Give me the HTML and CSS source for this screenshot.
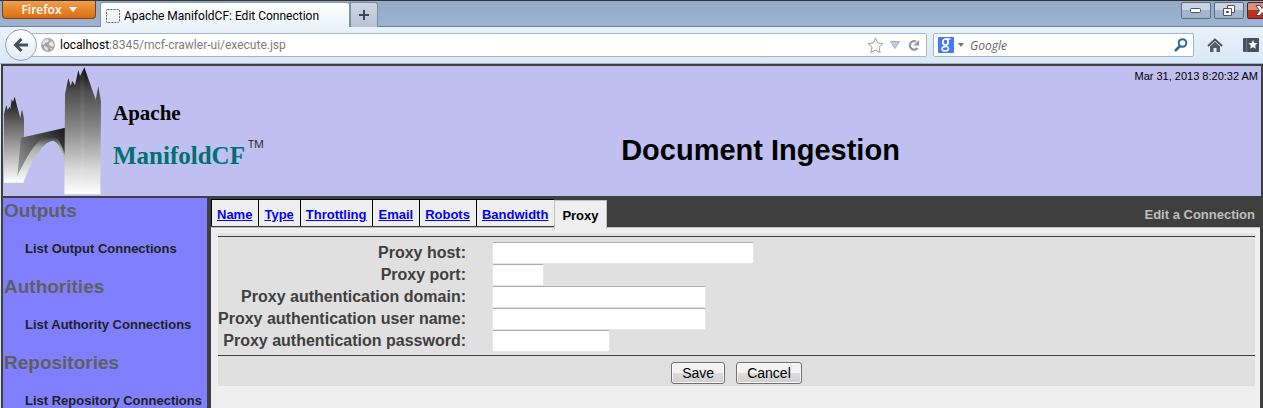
FILE: index.html
```
<!DOCTYPE html>
<html lang="en">
<head>
<meta charset="utf-8">
<title>Apache ManifoldCF: Edit Connection</title>
<link rel="stylesheet" href="styles.css">
</head>
<body>
<div class="titlebar">
  <button class="firefox" type="button">Firefox <svg width="8" height="5" viewBox="0 0 8 5"><path d="M0 0h8L4 5z" fill="#fff"/></svg></button>
  <div class="browser-tab">
    <svg width="14" height="14" viewBox="0 0 14 14"><rect x=".5" y=".5" width="13" height="13" rx="1" fill="none" stroke="#666" stroke-dasharray="2 1"/></svg>
    <span>Apache ManifoldCF: Edit Connection</span>
  </div>
  <button class="new-tab" type="button" aria-label="New tab"><svg width="12" height="12" viewBox="0 0 12 12"><path d="M6 1v10M1 6h10" stroke="#3c4754" stroke-width="2"/></svg></button>
  <div class="window-buttons">
    <button type="button" aria-label="Minimize"><svg width="12" height="5" viewBox="0 0 12 5"><rect x=".5" y=".5" width="10" height="4" rx="1" fill="#fff" stroke="#4c5665"/></svg></button>
    <button type="button" aria-label="Restore"><svg width="13" height="12" viewBox="0 0 13 12"><path d="M4.500.5h7v7h-7z" fill="#fff" stroke="#4c5665"/><path d="M.5 3.500h8v7h-8z" fill="#fff" stroke="#4c5665"/><path d="M3.500 6.500h2v1h-2z" fill="#9ab" stroke="#4c5665"/></svg></button>
    <button class="close" type="button" aria-label="Close"><svg width="14" height="11" viewBox="0 0 14 11"><path d="M1 .5h4l2 3 2-3h4L9.500 5.500l3.500 5H9l-2-3-2 3H1l3.500-5z" fill="#fff" stroke="#5b4450"/></svg></button>
  </div>
</div>
<div class="toolbar">
  <button class="back" type="button" aria-label="Back"><svg width="16" height="16" viewBox="0 0 16 16"><path d="M15 8H3M8.500 2L2.500 8l6 6" fill="none" stroke="#40505f" stroke-width="3"/></svg></button>
  <div class="address">
    <svg width="14" height="14" viewBox="0 0 14 14"><circle cx="7" cy="7" r="7" fill="#a5a5a5"/><path d="M2 3l4-2 2 1-1 2-3 1-1 2-2-1zM8 5l3-2 2 4-1 2-2-1-2-1zM3 8l3 1 1 2-1 2-3-3zM9 10l2 0-1 2z" fill="#e6e6e6"/></svg>
    <span class="url"><b>localhost</b>:8345/mcf-crawler-ui/execute.jsp</span>
    <svg width="17" height="17" viewBox="0 0 17 17"><path d="M8.500 1l2.200 5 5.300.6-4 3.600 1.200 5.500-4.700-2.800-4.700 2.800L5 10.200 1 6.600 6.300 6z" fill="#fbfbfb" stroke="#a0a0a0"/></svg>
    <svg width="10" height="8" viewBox="0 0 10 8"><path d="M.5.5h9L5 7.500z" fill="#c6ccd3" stroke="#a5b0bc"/></svg>
    <svg width="13" height="13" viewBox="0 0 13 13"><path d="M9 2.500A4.300 4.300 0 1 0 10.500 9" fill="none" stroke="#8b96a3" stroke-width="2.200"/><path d="M12 1v5.500H6.500z" fill="#8b96a3"/></svg>
  </div>
  <label class="search">
    <svg width="16" height="16" viewBox="0 0 16 16"><rect width="16" height="16" rx="1" fill="#4478f4"/><ellipse cx="7.500" cy="5" rx="2.700" ry="3" fill="none" stroke="#fff" stroke-width="1.700"/><path d="M8 2h4.500M7 8c0 1 3.500 1.500 3.500 3.700 0 3-6.500 3-6.500.3C4 9.800 6 9.500 8 9.500" fill="none" stroke="#fff" stroke-width="1.500"/></svg>
    <svg width="6" height="4" viewBox="0 0 6 4"><path d="M0 0h6L3 4z" fill="#777"/></svg>
    <input class="search-box" type="text" placeholder="Google" aria-label="Search">
    <svg width="14" height="14" viewBox="0 0 14 14"><circle cx="8.500" cy="5" r="3.800" fill="none" stroke="#2d679f" stroke-width="2"/><path d="M6 8l-5 5" stroke="#2d679f" stroke-width="2.500"/></svg>
  </label>
  <button class="tool" type="button" aria-label="Home"><svg width="16" height="15" viewBox="0 0 16 15"><path d="M1 8l7-6.500L15 8" fill="none" stroke="#46515d" stroke-width="1.800"/><path d="M3 8.500l5-4.700 5 4.700V14H9.500v-4h-3v4H3z" fill="#525d69"/></svg></button>
  <button class="tool bookmarks" type="button" aria-label="Bookmarks"><svg width="16" height="14" viewBox="0 0 16 14"><rect width="16" height="14" rx="1" fill="#46525f"/><path d="M3.500 0v14" stroke="#6d7883"/><path d="M10 2l1.300 3 3.200.3-2.400 2.200.7 3.300-2.800-1.700-2.800 1.700.7-3.300-2.400-2.200 3.200-.3z" fill="#fff"/></svg></button>
</div>
<div class="page">
  <header class="banner">
    <div class="logo">
      <svg width="98" height="129" viewBox="12 9 294 387">
        <defs>
          <linearGradient id="tall" x2="0" y2="1"><stop offset="0" stop-color="#080808"/><stop offset=".2" stop-color="#505050"/><stop offset=".5" stop-color="#8c8c8c"/><stop offset=".8" stop-color="#d8d8d8"/><stop offset="1" stop-color="#fff"/></linearGradient>
          <linearGradient id="short" x2="0" y2="1"><stop offset="0" stop-color="#111"/><stop offset=".3" stop-color="#606060"/><stop offset="1" stop-color="#fff"/></linearGradient>
          <linearGradient id="deck" x1="1" x2="0" y2="1"><stop offset="0" stop-color="#181818"/><stop offset=".5" stop-color="#606060"/><stop offset="1" stop-color="#b0b0b0"/></linearGradient>
          <linearGradient id="arch" x2="0" y2="1"><stop offset="0" stop-color="#333"/><stop offset=".25" stop-color="#aaa"/><stop offset=".7" stop-color="#ddd"/><stop offset="1" stop-color="#fff"/></linearGradient>
        </defs>
        <path d="M12 356V150l7-27 4 15 6-10 2 8 4-30 4 8 5-16 6 24 11 40 5-26 6 28v192z" fill="url(#short)"/>
        <path d="M63 221L196 191v100C184 250 172 228 158 228C125 235 90 290 70 356H50z" fill="url(#deck)"/>
        <path d="M50 340C80 280 110 219 148 216c26 0 38 30 48 58v18c-10-34-24-62-38-62-32 5-62 60-88 126H50z" fill="url(#arch)"/>
        <path d="M172 226c10 12 16 30 24 50" fill="none" stroke="#777" stroke-width="2"/>
        <path d="M193 391l2-300 10-48 7 22 5-14 8 12 10-44 5 18 13-27 34 97 8-40 8 46-2 278z" fill="url(#tall)"/>
        <path d="M241 30l12-20v381h-12z" fill="#fff" fill-opacity=".06"/>
      </svg>
      <div class="wordmark"><span class="apache">Apache</span><span class="manifold">ManifoldCF<small>TM</small></span></div>
    </div>
    <h1>Document Ingestion</h1>
    <time>Mar 31, 2013 8:20:32 AM</time>
  </header>
  <div class="columns">
    <nav class="sidebar">
      <h2>Outputs</h2><a href="#">List Output Connections</a>
      <h2>Authorities</h2><a href="#">List Authority Connections</a>
      <h2>Repositories</h2><a href="#">List Repository Connections</a>
    </nav>
    <main>
      <div class="tabs">
        <a href="#">Name</a><a href="#">Type</a><a href="#">Throttling</a><a href="#">Email</a><a href="#">Robots</a><a href="#">Bandwidth</a><span class="active">Proxy</span>
        <span class="tabs-title">Edit a Connection</span>
      </div>
      <form class="panel">
        <div class="fields">
          <label for="host">Proxy host:</label><input id="host" class="w-host" type="text">
          <label for="port">Proxy port:</label><input id="port" class="w-port" type="text">
          <label for="domain">Proxy authentication domain:</label><input id="domain" class="w-auth" type="text">
          <label for="user">Proxy authentication user name:</label><input id="user" class="w-auth" type="text">
          <label for="pass">Proxy authentication password:</label><input id="pass" class="w-pass" type="password">
        </div>
        <div class="actions"><button type="button">Save</button><button type="button">Cancel</button></div>
      </form>
    </main>
  </div>
</div>
</body>
</html>
```
FILE: styles.css
```
* { box-sizing: border-box; }
body {
  margin: 0;
  height: 100vh;
  overflow: hidden;
  display: flex;
  flex-direction: column;
  font-family: "Liberation Sans", Arial, sans-serif;
  background: #dce8f5;
}
svg { display: block; flex: none; }
button { font-family: inherit; padding: 0; }

/* Browser window */
.titlebar {
  display: flex;
  align-items: flex-start;
  height: 27px;
  flex: none;
  border-top: 1px solid #333;
  border-bottom: 1px solid #6f819a;
  background: linear-gradient(#94abc6, #9cb4d2);
  font-family: Roboto, "Open Sans", sans-serif;
}
.firefox {
  display: flex;
  align-items: center;
  justify-content: center;
  gap: 7px;
  width: 94px;
  height: 18px;
  margin-left: 2px;
  border: 1px solid #80401a;
  border-top: 0;
  border-radius: 0 0 4px 4px;
  background: linear-gradient(#efa04a, #dc6d12);
  color: #fff;
  font-family: "Open Sans", sans-serif;
  font-size: 12px;
  font-weight: 600;
  line-height: 16px;
}
.browser-tab {
  display: flex;
  align-items: center;
  gap: 4px;
  width: 250px;
  height: 26px;
  margin: 1px 0 0 4px;
  padding-left: 5px;
  border: 1px solid #8497af;
  border-bottom: 0;
  border-radius: 3px 3px 0 0;
  background: linear-gradient(#fff, #eaf2fb);
  color: #000;
  font-size: 12px;
  white-space: nowrap;
}
.new-tab {
  display: flex;
  align-items: center;
  justify-content: center;
  width: 28px;
  height: 25px;
  margin-top: 1px;
  border: 1px solid #7e90a8;
  border-bottom: 0;
  border-radius: 0 3px 0 0;
  background: linear-gradient(#cdd6e1, #b4c3d5);
}
.window-buttons {
  display: flex;
  gap: 3px;
  margin: 1px -14px 0 auto;
}
.window-buttons button {
  display: flex;
  align-items: center;
  justify-content: center;
  width: 30px;
  height: 17px;
  border: 1px solid #5c6c82;
  border-radius: 2px;
  background: linear-gradient(#c8d4e2 50%, #a3b5ca 50%);
}
.window-buttons .close {
  border-color: #571f27;
  background: linear-gradient(#d9907f 50%, #b8321c 50%);
}
.toolbar {
  display: flex;
  align-items: center;
  height: 37px;
  flex: none;
  border-bottom: 1px solid #9fb2c8;
  background: linear-gradient(#eaf2fb, #d9e7f6);
  font-family: Roboto, "Open Sans", sans-serif;
  font-size: 12px;
}
.back {
  z-index: 1;
  display: flex;
  align-items: center;
  justify-content: center;
  width: 32px;
  height: 32px;
  margin-left: 5px;
  border: 1px solid #93a4b8;
  border-radius: 50%;
  background: linear-gradient(#fff, #e2ebf6);
}
.address, .search {
  display: flex;
  align-items: center;
  height: 24px;
  border: 1px solid #a5b6c9;
  background: #fff;
}
.address {
  flex: 1;
  gap: 7px;
  margin-left: -6px;
  padding: 0 6px 0 9px;
  border-radius: 0 2px 2px 0;
}
.address svg:nth-of-type(2) { margin-right: -1px; }
.url {
  flex: 1;
  margin-left: -2px;
  color: #7d7d7d;
}
.url b { color: #000; font-weight: 400; }
.search {
  gap: 4px;
  width: 261px;
  margin-left: 6px;
  padding: 0 5px 0 4px;
  border-radius: 2px;
}
.search-box {
  flex: 1;
  min-width: 0;
  border: 0;
  padding: 0 0 0 2px;
  outline: 0;
  font: italic 12px "Open Sans", sans-serif;
}
.search-box::placeholder { color: #666; }
.tool { border: 0; background: none; margin-left: 13px; }
.bookmarks { margin: 0 4px 0 20px; }

/* Application page */
.page {
  flex: 1;
  min-height: 0;
  display: flex;
  flex-direction: column;
  margin-left: 1px;
  padding: 2px 2px 0;
  background: #3f3f3f;
}
.banner {
  display: grid;
  grid-template-columns: 257px 1fr;
  flex: none;
  height: 130px;
  background: #bfbff0;
}
.logo { grid-row: 1; display: flex; gap: 11px; padding: 1px; }
.wordmark {
  display: flex;
  flex-direction: column;
  gap: 8px;
  padding-top: 31px;
  font-family: "Liberation Serif", serif;
  font-weight: 700;
}
.apache { font-size: 21px; line-height: 30px; }
.manifold {
  display: flex;
  gap: 3px;
  color: #007070;
  font-size: 25px;
  line-height: 40px;
}
.manifold small {
  color: #222;
  font: 11px/16px "Open Sans", sans-serif;
}
.banner h1 {
  grid-area: 1 / 2;
  margin: 67px 0 0;
  font-size: 29px;
  line-height: 34px;
  text-align: center;
}
.banner time {
  grid-area: 1 / 2;
  justify-self: end;
  margin: 4px 3px 0 0;
  font-size: 11px;
  line-height: 13px;
  height: 13px;
}
.columns {
  flex: 1;
  min-height: 0;
  display: flex;
  gap: 4px;
  padding-top: 2px;
}
.sidebar {
  flex: none;
  width: 204px;
  background: #8080ff;
  overflow: hidden;
}
.sidebar h2 {
  margin: 0;
  padding: 2px 1px 0;
  color: #5f5f5f;
  font-size: 19px;
  line-height: 22px;
}
.sidebar a {
  display: block;
  padding: 19px 0 18px 22px;
  color: #222;
  font-size: 13px;
  font-weight: 700;
  line-height: 15px;
  text-decoration: none;
  white-space: nowrap;
}
main {
  flex: 1;
  min-width: 0;
  margin-right: 1px;
  background: #efefef;
}
.tabs {
  display: flex;
  height: 30px;
  padding-top: 1px;
  border-bottom: 1px solid #bfbfbf;
  background: #3f3f3f;
  font-size: 13px;
  font-weight: 700;
  line-height: 15px;
}
.tabs a {
  height: 27px;
  padding: 7px 6px 0 5px;
  border-top: 1px solid #000;
  border-left: 1px solid #000;
  background: #efefef;
  color: #00f;
}
.active {
  height: 29px;
  margin-top: 1px;
  padding: 7px 7px 0;
  border: 1px solid #bfbfbf;
  border-bottom: 0;
  background: #efefef;
}
.tabs-title {
  margin-left: auto;
  padding: 8px 5px 0;
  color: #bfbfbf;
}
.panel {
  margin: 5px 5px 0 7px;
  padding-top: 3px;
  background: #e0e0e0;
}
.fields {
  display: grid;
  grid-template-columns: 248px 1fr;
  column-gap: 26px;
  padding: 5px 0 3px;
  border-top: 1px solid #3f3f3f;
  border-bottom: 1px solid #3f3f3f;
}
.fields label {
  color: #3f3f3f;
  font-size: 16px;
  font-weight: 700;
  line-height: 22px;
  text-align: right;
  white-space: nowrap;
}
.fields input {
  height: 22px;
  border: 1px solid #e3e5ea;
  border-top-color: #abadb3;
  border-radius: 2px;
  background: #fff;
}
.w-host { width: 262px; }
.w-port { width: 52px; }
.w-auth { width: 214px; }
.w-pass { width: 118px; }
.actions {
  display: flex;
  justify-content: center;
  gap: 11px;
  padding: 6px 0 2px;
}
.actions button {
  height: 22px;
  padding: 0 10px;
  border: 1px solid #707070;
  border-radius: 3px;
  background: linear-gradient(#f2f2f2 50%, #dcdcdc 50%, #cfcfcf);
  box-shadow: inset 0 0 0 1px #f8f8f8;
  color: #000;
  font-size: 14px;
}
```
